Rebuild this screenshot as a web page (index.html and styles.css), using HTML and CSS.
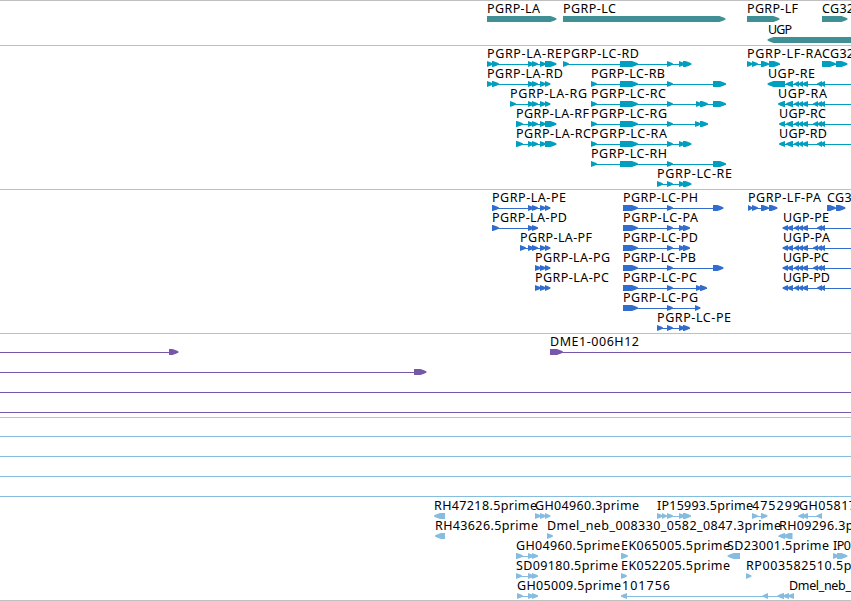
FILE: index.html
```html
<!DOCTYPE html>
<html lang="en">
<head>
    <meta charset="UTF-8">
    <title>Genome Tracks</title>
    <link rel="stylesheet" href="styles.css">
</head>
<body>
    <main class="browser">
        <section class="track genes" id="genes"></section>
        <section class="track transcripts" id="transcripts"></section>
        <section class="track proteins" id="proteins"></section>
        <section class="track bacs" id="bacs"></section>
        <section class="track ests" id="ests"></section>
    </main>
    <script src="tracks.js"></script>
</body>
</html>
```
FILE: styles.css
```css
body {
    margin: 0;
    background-color: #fff;
    overflow: hidden;
}

.browser {
    width: 851px;
    border-bottom: 1px solid #c0c0c0;
}

.track {
    border-top: 1px solid #c0c0c0;
    padding: 1px 0 2px;
}

.row {
    display: block;
    width: 851px;
    height: 20px;
    overflow: visible;
}

.label {
    font-family: "Noto Sans", "DejaVu Sans", sans-serif;
    font-size: 12.5px;
    fill: #000;
}

.genes {
    fill: #3f8f94;
    padding-bottom: 1px;
}

.genes .row {
    height: 21px;
}

.transcripts {
    fill: #009fbf;
}

.proteins {
    fill: #316dce;
}

.bacs {
    fill: #7657a8;
}

.ests {
    fill: #86bcdf;
    padding-bottom: 1px;
}
```
FILE: tracks.js
```js
var SVG = 'http://www.w3.org/2000/svg';
var WIDTH = 851;

// exons shared by several models
var laMid = [[528, 534], [532, 538]];
var laEnd = [[540, 546], [545, 550.5]];
var laLong = [[540, 546], [545, 556.5]];
var lcStart = [[591, 597], [620, 638], [667, 673]];
var lcCds = [[623, 638], [667, 673]];
var lcEnd = [[679, 685], [683, 691.5]];
var lcCdsEnd = [[679, 685], [683, 690]];
var ugpMid = [[794, 799], [798, 803], [802, 808]];
var ugpPair = [[817, 822], [820, 825]];
var ugpTriple = [[813, 818], [817, 822], [820, 825]];

// feature: [label, label x, label width, strand, exons, line start, line end]
var tracks = {
    genes: [
        [
            ['PGRP-LA', 487, 53, 1, [[487, 556.5]]],
            ['PGRP-LC', 563, 53, 1, [[563, 725.5]]],
            ['PGRP-LF', 747, 51, 1, [[747, 779.5]]],
            ['CG32', 822, 32, 1, [[822, 847.5]]]
        ],
        [
            ['UGP', 768, 24, -1, [[767.5, 870]]]
        ]
    ],
    transcripts: [
        [
            ['PGRP-LA-RE', 487, 75, 1, [[487, 493], [492, 499]].concat(laMid, laLong)],
            ['PGRP-LC-RD', 563, 76, 1, [[563, 569], [620, 638], [667, 673]].concat(lcEnd)],
            ['PGRP-LF-RA', 747, 75, 1, [[747, 753], [752, 758], [761, 769], [769, 780]]],
            ['CG32', 822, 32, 1, [[822, 836], [836, 847.5]]]
        ],
        [
            ['PGRP-LA-RD', 487, 76, 1, [[487, 493], [492, 499]].concat(laMid, laEnd)],
            ['PGRP-LC-RB', 591, 74, 1, lcStart.concat([[713, 726]])],
            ['UGP-RE', 768, 47, -1, [[767.5, 785], [786, 793]].concat(ugpMid, ugpPair), 768, WIDTH]
        ],
        [
            ['PGRP-LA-RG', 510, 77, 1, [[510, 516]].concat(laMid, laEnd)],
            ['PGRP-LC-RC', 591, 75, 1, lcStart.concat([[696, 702], [700, 708], [713, 726]])],
            ['UGP-RA', 778, 49, -1, [[778, 785], [786, 793]].concat(ugpMid, ugpTriple), 779, WIDTH]
        ],
        [
            ['PGRP-LA-RF', 516, 73, 1, [[516, 523]].concat(laMid, laLong)],
            ['PGRP-LC-RG', 591, 76, 1, lcStart.concat([[695, 701], [700, 708]])],
            ['UGP-RC', 779, 47, -1, [[779, 785], [786, 793]].concat(ugpMid, ugpTriple), 780, WIDTH]
        ],
        [
            ['PGRP-LA-RC', 516, 75, 1, [[516, 523]].concat(laMid, laLong)],
            ['PGRP-LC-RA', 591, 76, 1, lcStart.concat(lcEnd)],
            ['UGP-RD', 779, 48, -1, [[779, 785], [786, 793]].concat(ugpMid, ugpPair), 780, WIDTH]
        ],
        [
            ['PGRP-LC-RH', 591, 76, 1, lcStart.concat([[713, 726]])]
        ],
        [
            ['PGRP-LC-RE', 657, 75, 1, [[657, 663], [667, 673]].concat(lcEnd)]
        ]
    ],
    proteins: [
        [
            ['PGRP-LA-PE', 492, 74, 1, [[492, 499]].concat(laMid, laEnd)],
            ['PGRP-LC-PH', 623, 75, 1, lcCds.concat([[713, 723.5]])],
            ['PGRP-LF-PA', 748, 73, 1, [[748, 753], [752, 758], [761, 769], [769, 777.5]]],
            ['CG32', 827, 32, 1, [[827, 836], [836, 845.5]]]
        ],
        [
            ['PGRP-LA-PD', 492, 75, 1, [[492, 499]].concat(laMid)],
            ['PGRP-LC-PA', 623, 75, 1, lcCds.concat(lcCdsEnd)],
            ['UGP-PE', 783, 46, -1, [[782.5, 788], [787, 793]].concat(ugpMid, ugpPair), 784, WIDTH]
        ],
        [
            ['PGRP-LA-PF', 520, 72, 1, [[520, 526]].concat(laMid, laEnd)],
            ['PGRP-LC-PD', 623, 75, 1, lcCds.concat(lcCdsEnd)],
            ['UGP-PA', 783, 47, -1, [[782.5, 788], [787, 793]].concat(ugpMid, ugpTriple), 784, WIDTH]
        ],
        [
            ['PGRP-LA-PG', 535, 75, 1, [[535, 541]].concat(laEnd)],
            ['PGRP-LC-PB', 623, 73, 1, lcCds.concat([[713, 723.5]])],
            ['UGP-PC', 783, 46, -1, [[782.5, 788], [787, 793]].concat(ugpMid, ugpTriple), 784, WIDTH]
        ],
        [
            ['PGRP-LA-PC', 535, 74, 1, [[535, 541]].concat(laEnd)],
            ['PGRP-LC-PC', 623, 74, 1, lcCds.concat([[696, 702], [700, 707]])],
            ['UGP-PD', 783, 47, -1, [[782.5, 788], [787, 793]].concat(ugpMid, ugpPair), 784, WIDTH]
        ],
        [
            ['PGRP-LC-PG', 623, 75, 1, lcCds.concat([[695, 700.5]])]
        ],
        [
            ['PGRP-LC-PE', 657, 74, 1, [[657, 663], [667, 673]].concat(lcCdsEnd)]
        ]
    ],
    bacs: [
        [
            ['', 0, 0, 1, [[169, 178.5]], 0, 178],
            ['DME1-006H12', 550, 89, 1, [[550, 563]], 550, WIDTH]
        ],
        [
            ['', 0, 0, 1, [[414, 426.5]], 0, 426]
        ],
        [
            ['', 0, 0, 1, [], 0, WIDTH]
        ],
        [
            ['', 0, 0, 1, [], 0, WIDTH]
        ]
    ],
    ests: [
        [['', 0, 0, 1, [], 0, WIDTH]],
        [['', 0, 0, 1, [], 0, WIDTH]],
        [['', 0, 0, 1, [], 0, WIDTH]],
        [['', 0, 0, 1, [], 0, WIDTH]],
        [
            ['RH47218.5prime', 434, 103, -1, [[434, 445]]],
            ['GH04960.3prime', 535, 104, 1, [[535, 541]].concat(laEnd)],
            ['IP15993.5prime', 657, 96, 1, [[657, 663], [662, 667], [667, 673], [679, 685], [683, 691]]],
            ['475299', 752, 48, 1, [[752, 758], [761, 767.5]]],
            ['GH05817', 799, 57, -1, [[798.5, 804], [802, 808], [816.5, 822]]]
        ],
        [
            ['RH43626.5prime', 435, 103, -1, [[435, 445]]],
            ['Dmel_neb_008330_0582_0847.3prime', 547, 234, 1, [[547, 553]]],
            ['RH09296.3prime', 779, 103, -1, [[778.5, 785], [783, 792.5]]]
        ],
        [
            ['GH04960.5prime', 516, 104, 1, [[516, 523]].concat(laMid)],
            ['EK065005.5prime', 621, 109, 1, [[621, 628]]],
            ['SD23001.5prime', 727, 102, -1, [[727.5, 740]]],
            ['IP0', 833, 18, 1, [[833, 839], [837, 847.5]]]
        ],
        [
            ['SD09180.5prime', 516, 102, 1, [[516, 522]].concat(laMid)],
            ['EK052205.5prime', 621, 109, 1, [[621, 627]]],
            ['RP003582510.5prime', 746, 135, 1, [[746, 751.5]]]
        ],
        [
            ['GH05009.5prime', 517, 104, 1, [[517, 523]].concat(laMid)],
            ['101756', 622, 48, -1, [[621, 627], [762.5, 768], [777.5, 784], [783, 789], [788, 794]]],
            ['Dmel_neb_', 789, 62, 1, []]
        ]
    ]
};

function add(parent, name, attrs) {
    var el = document.createElementNS(SVG, name);
    for (var key in attrs) {
        el.setAttribute(key, attrs[key]);
    }
    parent.appendChild(el);
    return el;
}

// a box which narrows to a point on the strand side
function exonPoints(x1, x2, strand) {
    var head = Math.min(6, x2 - x1);
    var tail = strand > 0 ? x1 : x2;
    var tip = strand > 0 ? x2 : x1;
    var neck = tip - head * strand;
    var bend = tip - 2 * strand;
    return [
        [tail, 14], [neck, 14], [bend, 15.6], [tip, 16.5],
        [tip, 17.5], [bend, 18.4], [neck, 20], [tail, 20]
    ].join(' ');
}

function drawFeature(svg, feature) {
    var label = feature[0];
    var strand = feature[3];
    var exons = feature[4];
    var start = feature[5];
    var end = feature[6];

    if (start === undefined && exons.length > 1) {
        start = exons[0][0];
        end = Math.floor(exons[exons.length - 1][1]);
    }
    if (start !== undefined) {
        add(svg, 'rect', { x: start, y: 17, width: end - start, height: 1 });
    }

    exons.forEach(function (exon) {
        add(svg, 'polygon', { points: exonPoints(exon[0], exon[1], strand) });
    });

    if (label) {
        var text = add(svg, 'text', {
            'class': 'label',
            x: feature[1],
            y: 11,
            textLength: feature[2]
        });
        text.textContent = label;
    }
}

Object.keys(tracks).forEach(function (id) {
    var section = document.getElementById(id);
    tracks[id].forEach(function (row) {
        var svg = add(section, 'svg', { 'class': 'row' });
        row.forEach(function (feature) {
            drawFeature(svg, feature);
        });
    });
});
```
